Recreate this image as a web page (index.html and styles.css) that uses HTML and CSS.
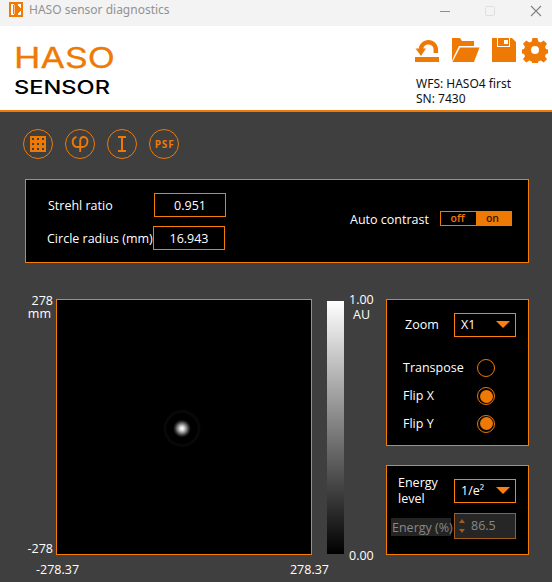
FILE: index.html
```html
<!DOCTYPE html>
<html lang="en">
<head>
<meta charset="utf-8">
<title>HASO sensor diagnostics</title>
<link rel="stylesheet" href="styles.css">
</head>
<body>
<div class="titlebar">
  <svg class="app-icon" width="14" height="15" viewBox="0 0 14 15"><path fill="#ee7a08" d="M0 0h14v15H0z"/><path fill="#fff" d="M2 2h3v1H4v9h1v1H2zM9 2h3v4h-1V5h-1V4H9zM12 9v4H9v-2h1v-1h1V9z"/><path fill="#fff" d="M5 3h1v9H5z" opacity=".55"/></svg>
  <span class="title">HASO sensor diagnostics</span>
  <svg class="window-controls" width="112" height="18" viewBox="0 0 112 18" fill="none"><path stroke="#8c8c8c" d="M0 9.5h10"/><rect x="45.500" y="4.500" width="9" height="9" rx="1" stroke="#dedede"/><path stroke="#858585" stroke-width="1.200" d="M91 4l10 10M101 4L91 14"/></svg>
</div>
<header class="header">
  <div class="brand">
    <svg width="112" height="64" viewBox="0 0 112 64"><text class="logo-main" x="0" y="31" textLength="101" lengthAdjust="spacingAndGlyphs">HASO</text><text class="logo-sub" x="0" y="57" textLength="96" lengthAdjust="spacingAndGlyphs">SENSOR</text></svg>
  </div>
  <div class="tools">
    <svg class="tool-icons" width="133" height="26" viewBox="0 0 133 26" fill="#ee7a05">
      <path d="M0 20h24v5H0z"/>
      <path d="M20.800 16V11.500A7.500 7.500 0 0 0 6.200 10.500V13" fill="none" stroke="#ee7a05" stroke-width="4.500"/>
      <path d="M.5 11.500h10.500L6 19z"/>
      <path d="M37 1h8l2 3h12v5H44l-5 10-2 5z"/><path d="M45 10.500h19.500L59 25H37.500z"/>
      <path fill-rule="evenodd" d="M77 1h20l4 4v20H77zM82 1v9h13V1h-1v8H83V1zM89 3v4h4V3z"/>
      <g transform="translate(120 13)"><path fill-rule="evenodd" d="M-2.500-12h5l.8 3.500 2.400 1 3-2 3.300 3.300-2 3 1 2.200 2 .4v4l-2 .5-1 2.300 2 3-3.300 3.300-3-2-2.400 1-.8 2.500h-5l-.8-2.500-2.400-1-3 2L-12 9.200l2-3-1-2.300-2-.5v-4l2-.4 1-2.200-2-3 3.300-3.300 3 2 2.400-1zM0-4A4 4 0 1 0 0 4 4 4 0 0 0 0-4z"/></g>
    </svg>
    <div class="device">WFS: HASO4 first<br>SN: 7430</div>
  </div>
</header>
<main class="content">
  <nav class="views">
    <svg width="32" height="32" viewBox="0 0 32 32"><circle class="ring" cx="16" cy="16" r="14.500"/><path fill="#ee7a05" d="M8 8h16v16H8z"/><path fill="#3f3f3f" d="M10 10h2v2h-2zm5 0h2v2h-2zm5 0h2v2h-2zM10 15h2v2h-2zm5 0h2v2h-2zm5 0h2v2h-2zM10 20h2v2h-2zm5 0h2v2h-2zm5 0h2v2h-2z"/></svg>
    <svg width="32" height="32" viewBox="0 0 32 32"><circle class="ring" cx="16" cy="16" r="14.500"/><path fill="none" stroke="#ee7a05" stroke-width="1.900" d="M12.500 8.800C7 10.500 7.500 19 14 19h4c6.500 0 7.500-10 1.500-10-2.500 0-3.300 1.500-3.300 4V24"/></svg>
    <svg width="32" height="32" viewBox="0 0 32 32"><circle class="ring" cx="16" cy="16" r="14.500"/><path fill="#ee7a05" d="M12 8h8v2h-3v12h3v2h-8v-2h3V10h-3z"/></svg>
    <svg width="32" height="32" viewBox="0 0 32 32"><circle class="ring" cx="16" cy="16" r="14.500"/><text class="psf" x="6.700" y="20" textLength="19">PSF</text></svg>
  </nav>
  <section class="panel metrics">
    <div class="readings">
      <div class="reading first"><span class="label ratio">Strehl ratio</span><output class="value">0.951</output></div>
      <div class="reading"><span class="label radius">Circle radius (mm)</span><output class="value">16.943</output></div>
    </div>
    <div class="contrast"><span class="label auto">Auto contrast</span><div class="toggle"><span>off</span><span class="active">on</span></div></div>
  </section>
  <div class="workspace">
    <div class="y-axis"><div>278<br><span class="unit">mm</span></div><div>-278</div></div>
    <div class="plot"><svg width="254" height="254" viewBox="0 0 254 254">
      <defs><radialGradient id="spot"><stop offset="0" stop-color="#fff"/><stop offset=".22" stop-color="#ddd"/><stop offset=".5" stop-color="#888"/><stop offset=".78" stop-color="#2c2c2c"/><stop offset="1" stop-color="#000"/></radialGradient></defs>
      <circle cx="125" cy="128.500" r="17" fill="none" stroke="#080808" stroke-width="3"/><circle cx="125" cy="128.500" r="9" fill="url(#spot)"/>
    </svg></div>
    <div class="colorbar"></div>
    <div class="scale"><div>1.00<br><span class="au">AU</span></div><div>0.00</div></div>
    <aside class="side">
      <section class="panel view-options">
        <div class="option zoom"><span class="label">Zoom</span><div class="select"><span>X1</span><svg width="14" height="8"><path d="M0 0h14L7 7z" fill="#ff7f0a"/></svg></div></div>
        <div class="option transpose"><span class="label">Transpose</span><i class="radio"></i></div>
        <div class="option flip-x"><span class="label">Flip X</span><i class="radio checked"></i></div>
        <div class="option flip-y"><span class="label">Flip Y</span><i class="radio checked"></i></div>
      </section>
      <section class="panel energy">
        <div class="level"><span class="label">Energy<br>level</span><div class="select"><span>1/e²</span><svg width="14" height="8"><path d="M0 0h14L7 7z" fill="#ff7f0a"/></svg></div></div>
        <div class="percent"><span class="disabled">Energy (%)</span><div class="spinner"><svg width="6" height="16"><path d="M0 5l3-4 3 4zM0 11h6l-3 4z" fill="#a25a1d"/></svg><span>86.5</span></div></div>
      </section>
    </aside>
  </div>
  <div class="x-axis"><span>-278.37</span><span>278.37</span></div>
</main>
</body>
</html>
```
FILE: styles.css
```css
* { box-sizing: border-box; }
body {
  margin: 0;
  width: 552px;
  height: 582px;
  overflow: hidden;
  background: #3f3f3f;
  color: #fff;
  font: 12.5px/14px "Open Sans", "Noto Sans", sans-serif;
}
svg { display: block; flex: none; }
.titlebar { display: flex; height: 26px; padding: 2px 0 0 9px; background: #f3f3f3; }
.title { margin: 1px 0 0 6px; color: #929292; font: 12px/14px "Noto Sans", sans-serif; }
.window-controls { margin-left: auto; }
.header { display: flex; justify-content: space-between; height: 86px; padding-left: 14px; background: #fff; border-bottom: 2px solid #ee7a05; }
.brand { padding-top: 12px; }
.brand svg { margin-top: -1px; overflow: visible; }
.logo-main { font: 28px Inter, sans-serif; fill: #ee7a05; stroke: #ee7a05; stroke-width: .3; }
.logo-sub { font: 500 19px Inter, sans-serif; fill: #000; }
.tools { width: 137px; padding-top: 11px; color: #111; }
.device { margin-top: 13px; padding-left: 1px; font: 12px/15px "Noto Sans", sans-serif; }
.views { display: flex; gap: 10px; padding: 16px 0 0 22px; }
.ring { fill: none; stroke: #ee7a05; stroke-width: 1; }
.psf { fill: #ee7a05; font: 700 10px "Open Sans", sans-serif; }
.panel { background: #000; border: 1px solid #f57c05; }
.metrics { display: flex; justify-content: space-between; width: 504px; height: 84px; margin: 19px 0 0 25px; padding: 13px 16px 12px 21px; }
.readings { display: grid; gap: 9px; }
.reading { display: flex; height: 24px; }
.reading .label { width: 106px; padding-top: 6px; }
.first { padding-left: 1px; }
.value { width: 72px; height: 24px; border: 1px solid #f57c05; text-align: center; line-height: 24px; }
.contrast { display: flex; width: 162px; }
.auto { width: 90px; padding-top: 20px; }
.toggle { display: flex; width: 72px; height: 15px; margin-top: 18px; border: 1px solid #ee7a05; color: #ee7a05; font: 600 10.5px/12px "Open Sans", sans-serif; text-align: center; }
.toggle span { flex: 1; padding-right: 2px; }
.toggle .active { background: #ee7a05; color: #321900; }
.workspace { display: flex; height: 256px; margin-top: 36px; }
.y-axis, .scale { display: flex; flex-direction: column; justify-content: space-between; }
.y-axis { width: 56px; height: 262px; margin-top: -6px; padding: 1px 3px 0 0; text-align: right; line-height: 13px; }
.unit { padding-right: 2px; }
.plot { width: 256px; height: 256px; border: 1px solid #f57c05; background: #000; }
.colorbar { width: 17px; height: 253px; margin: 2px 0 0 15px; background: linear-gradient(#fff, #000); }
.scale { width: 42px; height: 271px; margin-top: -7px; padding-left: 5px; line-height: 15px; }
.au { padding-left: 4px; }
.side { width: 143px; }
.view-options { height: 147px; padding: 13px 12px 0 16px; }
.option { display: flex; align-items: center; justify-content: space-between; height: 28px; }
.zoom { height: 24px; padding-left: 2px; }
.transpose { margin-top: 17px; }
.flip-y { height: 27px; }
.select { display: flex; align-items: center; width: 62px; height: 24px; padding: 0 5px 0 6px; border: 1px solid #ff7f0a; justify-content: space-between; }
.radio { display: grid; place-items: center; width: 18px; height: 18px; margin-right: 21px; border: 1px solid #ee7a05; border-radius: 50%; }
.checked::before { content: ""; width: 13px; height: 13px; border-radius: 50%; background: #ee7a05; }
.energy { height: 90px; margin-top: 19px; padding: 9px 12px 0 4px; }
.level { display: flex; justify-content: space-between; height: 38px; padding-left: 7px; line-height: 16px; }
.level .select { margin-top: 4px; }
.percent { display: flex; justify-content: space-between; }
.disabled { width: 60px; height: 18px; margin-top: 5px; padding-left: 1px; background: #242424; color: #888; line-height: 19px; white-space: nowrap; }
.spinner { display: flex; align-items: center; gap: 6px; width: 62px; height: 26px; padding-left: 4px; border: 1px solid #a25a1d; background: #262626; color: #888; }
.x-axis { display: flex; justify-content: space-between; width: 293px; margin: 8px 0 0 36px; }
```
